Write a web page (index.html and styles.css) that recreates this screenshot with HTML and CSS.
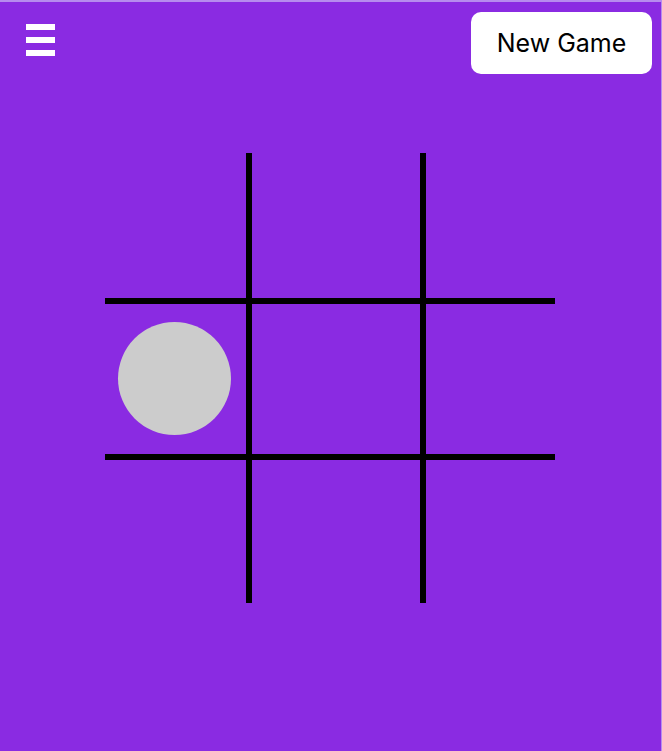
FILE: index.html
```html
<!DOCTYPE html>
<html>
<head>
<meta charset="utf-8">
<link rel="stylesheet" href="styles.css">
</head>
<body>
<div class="app">
  <header class="topbar">
    <div class="menu" aria-label="Menu">
      <span class="bar"></span>
      <span class="bar"></span>
      <span class="bar"></span>
    </div>
    <button class="new-game">New Game</button>
  </header>
  <main class="board">
    <div class="cell"></div>
    <div class="cell"></div>
    <div class="cell"></div>
    <div class="cell"><div class="piece"></div></div>
    <div class="cell"></div>
    <div class="cell"></div>
    <div class="cell"></div>
    <div class="cell"></div>
    <div class="cell"></div>
  </main>
</div>
</body>
</html>
```

FILE: styles.css
```css
html, body {
  margin: 0;
  padding: 0;
  background: #b68cee;
}
body {
  width: 662px;
  height: 751px;
  overflow: hidden;
  font-family: Inter, "Noto Sans", sans-serif;
}
.app {
  margin-top: 2px;
  width: 661px;
  height: 749px;
  background: #8a2be2;
  display: flex;
  flex-direction: column;
}
.topbar {
  display: flex;
  justify-content: space-between;
  align-items: flex-start;
  padding: 10px 9px 0 26px;
}
.menu {
  display: flex;
  flex-direction: column;
  gap: 7px;
  padding-top: 12px;
}
.bar {
  display: block;
  width: 29px;
  height: 6px;
  background: #ffffff;
}
.new-game {
  width: 181px;
  height: 62px;
  border: none;
  border-radius: 10px;
  background: #ffffff;
  color: #000000;
  font-family: Inter, "Noto Sans", sans-serif;
  font-size: 25px;
  padding: 0;
}
.board {
  margin: 79px 0 0 105px;
  width: 450px;
  height: 450px;
  display: grid;
  grid-template-columns: 141px 168px 129px;
  grid-template-rows: 145px 150px 143px;
  gap: 6px;
  background: #000000;
}
.cell {
  background: #8a2be2;
  display: flex;
  align-items: center;
  justify-content: center;
}
.piece {
  width: 113px;
  height: 113px;
  margin: 0 3px 2px 0;
  border-radius: 50%;
  background: #cccccc;
}
```
